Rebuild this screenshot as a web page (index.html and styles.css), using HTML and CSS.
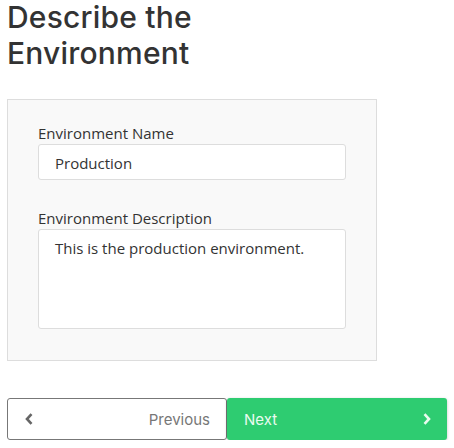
FILE: index.html
```html
<!DOCTYPE html>
<html>
<head>
<meta charset="utf-8">
<link rel="stylesheet" href="styles.css">
</head>
<body>
<div class="page">
  <h1 class="title">Describe the<br>Environment</h1>
  <div class="card">
    <div class="group">
      <div class="label">Environment Name</div>
      <div class="field">Production</div>
    </div>
    <div class="group">
      <div class="label">Environment Description</div>
      <div class="field area">This is the production environment.</div>
    </div>
  </div>
  <div class="nav">
    <div class="btn prev">
      <svg class="chev" width="8" height="12" viewBox="0 0 8 12"><path d="M6.5 1.2 L2 6 L6.5 10.8" fill="none" stroke="#666" stroke-width="2.6" stroke-linejoin="miter"/></svg>
      <span>Previous</span>
    </div>
    <div class="btn next">
      <span>Next</span>
      <svg class="chev" width="8" height="12" viewBox="0 0 8 12"><path d="M1.5 1.2 L6 6 L1.5 10.8" fill="none" stroke="#e9fbef" stroke-width="2.6" stroke-linejoin="miter"/></svg>
    </div>
  </div>
</div>
</body>
</html>
```
FILE: styles.css
```css
html, body {
  margin: 0;
  padding: 0;
  background: #fff;
}
body {
  padding: 0 7px;
  font-family: "Open Sans", "Liberation Sans", sans-serif;
  color: #333;
}
.page {
  width: 440px;
}
.title {
  margin: -1px 0 28px 0;
  font-family: Inter, "DejaVu Sans", sans-serif;
  font-weight: 500;
  font-size: 30px;
  line-height: 36px;
  letter-spacing: 0.2px;
  color: #333;
}
.card {
  box-sizing: border-box;
  width: 370px;
  border: 1px solid #ddd;
  background: #f9f9f9;
  padding: 23px 30px 31px;
}
.group + .group {
  margin-top: 28px;
}
.label {
  font-size: 15px;
  line-height: 20px;
  margin-bottom: 1px;
  color: #333;
}
.field {
  box-sizing: border-box;
  height: 36px;
  border: 1px solid #ddd;
  border-radius: 3px;
  background: #fff;
  padding: 2px 16px 0;
  font-size: 15px;
  line-height: 32px;
  color: #333;
}
.field.area {
  height: 100px;
  padding: 8px 16px;
  line-height: 20px;
}
.nav {
  display: flex;
  margin-top: 37px;
  height: 42px;
}
.btn {
  box-sizing: border-box;
  width: 220px;
  height: 42px;
  border-radius: 3px;
  display: flex;
  align-items: center;
  justify-content: space-between;
  font-family: Inter, "DejaVu Sans", sans-serif;
  font-size: 15px;
}
.prev {
  border: 1px solid #777;
  background: #fff;
  color: #777;
  padding: 0 16px 0 17px;
}
.next {
  background: #2ecc71;
  color: #eafbf0;
  padding: 0 16px 0 17px;
  box-shadow: 0 1px 3px rgba(0, 0, 0, 0.25);
}
.chev {
  display: block;
}
```
